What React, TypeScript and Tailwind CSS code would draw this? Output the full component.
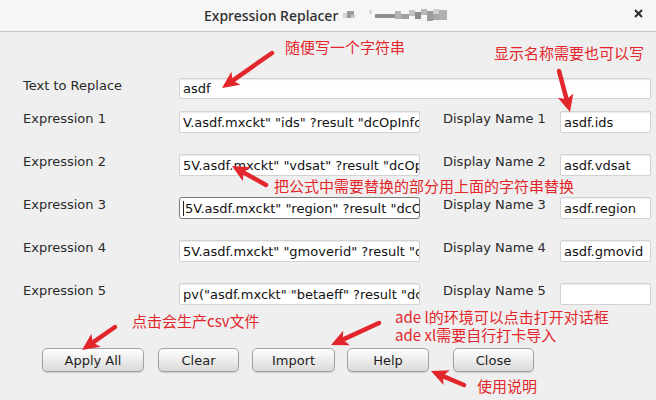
import React from "react";

const exprRows = [
  { n: 1, expr: 'V.asdf.mxckt" "ids" ?result "dcOpInfo")', name: "asdf.ids" },
  { n: 2, expr: '5V.asdf.mxckt" "vdsat" ?result "dcOpInfo")', name: "asdf.vdsat" },
  { n: 3, expr: '5V.asdf.mxckt" "region" ?result "dcOpInfo")', name: "asdf.region", focused: true },
  { n: 4, expr: '5V.asdf.mxckt" "gmoverid" ?result "dcOpInfo")', name: "asdf.gmovid" },
  { n: 5, expr: 'pv("asdf.mxckt" "betaeff" ?result "dcOpInfo")', name: "" },
];

const buttons = [
  { label: "Apply All", cls: "w-[102px]" },
  { label: "Clear", cls: "w-[81px] ml-[14px]" },
  { label: "Import", cls: "w-[83px] ml-[13px]" },
  { label: "Help", cls: "w-[82px] ml-[12px]" },
  { label: "Close", cls: "w-[81px] ml-[24px]" },
];

// annotation arrows: tail -> tip
const arrows = [
  [272, 53, 222, 88],
  [559, 71, 570, 112],
  [266, 185, 232, 166],
  [115, 327, 82, 350],
  [379, 323, 331, 345],
  [464, 385, 431, 371],
];

const notes = [
  { text: "随便写一个字符串", cls: "left-[285px] top-[39px]" },
  { text: "显示名称需要也可以写", cls: "left-[494px] top-[45px]" },
  { text: "把公式中需要替换的部分用上面的字符串替换", cls: "left-[274px] top-[178px]" },
  { text: "点击会生产csv文件", cls: "left-[132px] top-[313px]" },
  { text: "ade l的环境可以点击打开对话框", cls: "left-[395px] top-[309px]" },
  { text: "ade xl需要自行打卡导入", cls: "left-[395px] top-[327px]" },
  { text: "使用说明", cls: "left-[477px] top-[378px]" },
];

// mosaic blur after the window title
const mosaic: [number, number, number, number, string][] = [
  [0, 5, 4, 5, "#d4d4d4"],
  [4, 3, 7, 7, "#9a9a9a"],
  [8, 7, 4, 3, "#c8c8c8"],
  [26, 2, 3, 4, "#dadada"],
  [32, 6, 20, 4, "#8e8e8e"],
  [52, 3, 6, 8, "#b4b4b4"],
  [58, 6, 8, 5, "#a0a0a0"],
  [66, 2, 6, 6, "#c2c2c2"],
  [72, 4, 6, 7, "#8c8c8c"],
  [78, 1, 6, 6, "#b8b8b8"],
  [84, 3, 6, 10, "#9c9c9c"],
  [90, 1, 6, 5, "#d0d0d0"],
  [90, 6, 6, 6, "#a8a8a8"],
  [96, 2, 8, 10, "#b0b0b0"],
];

function Arrow({ a }: { a: number[] }) {
  const [x1, y1, x2, y2] = a;
  const dx = x2 - x1;
  const dy = y2 - y1;
  const len = Math.hypot(dx, dy);
  const ux = dx / len;
  const uy = dy / len;
  const px = -uy;
  const py = ux;
  const head = 17;
  const hw = 8;
  const bx = x2 - ux * head;
  const by = y2 - uy * head;
  const nx = bx + ux * 4;
  const ny = by + uy * 4;
  return (
    <g fill="#e3262b" stroke="#e3262b">
      <line x1={x1} y1={y1} x2={nx} y2={ny} strokeWidth={4.5} strokeLinecap="round" />
      <polygon
        strokeWidth={0}
        points={`${x2},${y2} ${bx + px * hw},${by + py * hw} ${nx},${ny} ${bx - px * hw},${by - py * hw}`}
      />
    </g>
  );
}

function Field({ value, focused, className }: { value: string; focused?: boolean; className: string }) {
  return (
    <div
      className={[
        "flex items-center overflow-hidden whitespace-nowrap bg-white pl-[3px] text-[13px] text-[#111]",
        focused
          ? "rounded-[3px] border border-[#7c7c7c]"
          : "rounded-[2px] border border-[#d2d2d2] shadow-[inset_0_1px_1px_rgba(0,0,0,0.08)]",
        className,
      ].join(" ")}
    >
      {focused && <span className="mr-[1px] h-[15px] w-[1px] shrink-0 bg-[#222]" />}
      {value}
    </div>
  );
}

export default function App() {
  return (
    <div className="relative h-[400px] w-[656px] overflow-hidden bg-[#efefef] font-['DejaVu_Sans',sans-serif] leading-[15px] text-[#2a2a2a]">
      {/* window title bar */}
      <div className="relative flex h-[32px] items-center border-b border-[#c6c6c6] bg-[#f6f6f6]">
        <span className="ml-[204px] font-['Noto_Sans',sans-serif] text-[14px] font-medium text-[#2e2e2e]">
          Expression Replacer
        </span>
        <svg width="110" height="16" className="ml-[5px]">
          {mosaic.map(([x, y, w, h, c], i) => (
            <rect key={i} x={x} y={y} width={w} height={h} fill={c} />
          ))}
        </svg>
        <svg width="9" height="9" className="absolute left-[634px] top-[9px]" viewBox="0 0 9 9">
          <path d="M1 1L8 8M8 1L1 8" stroke="#2e2e2e" strokeWidth="2" />
        </svg>
      </div>

      {/* form */}
      <div className="pl-[23px] pt-[46px] text-[13px]">
        <div className="flex items-start">
          <span className="w-[156px]">Text to Replace</span>
          <Field value="asdf" className="h-[21px] w-[472px]" />
        </div>

        {exprRows.map((r) => (
          <div key={r.n} className={["flex items-start", r.n === 1 ? "mt-[12px]" : "mt-[21px]"].join(" ")}>
            <span className="w-[156px]">Expression {r.n}</span>
            <Field value={r.expr} focused={r.focused} className="h-[22px] w-[241px]" />
            <span className="ml-[23px] w-[117px]">Display Name {r.n}</span>
            <Field value={r.name} className="h-[22px] w-[91px]" />
          </div>
        ))}

        <div className="ml-[19px] mt-[43px] flex">
          {buttons.map((b) => (
            <button
              key={b.label}
              type="button"
              className={[
                "h-[24px] rounded-[5px] border border-[#a2a2a2] bg-gradient-to-b from-[#ffffff] to-[#dadada] text-[13px] text-[#1e1e1e] shadow-[0_1px_1px_rgba(0,0,0,0.15)]",
                b.cls,
              ].join(" ")}
            >
              {b.label}
            </button>
          ))}
        </div>
      </div>

      {/* red annotations over the dialog */}
      <svg className="pointer-events-none absolute left-0 top-0" width="656" height="400">
        {arrows.map((a, i) => (
          <Arrow key={i} a={a} />
        ))}
      </svg>
      {notes.map((n) => (
        <span
          key={n.text}
          className={[
            "absolute whitespace-nowrap font-['Noto_Sans_CJK_SC',sans-serif] text-[15px] leading-[16px] text-[#e3262b]",
            n.cls,
          ].join(" ")}
        >
          {n.text}
        </span>
      ))}
    </div>
  );
}
